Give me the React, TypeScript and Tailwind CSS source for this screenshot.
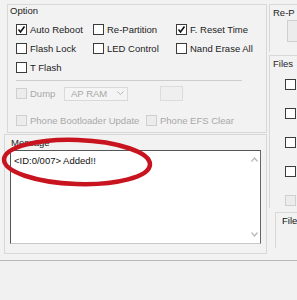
import React from "react";

type CheckProps = {
  label?: string;
  checked?: boolean;
  disabled?: boolean;
};

function Check({ label, checked, disabled }: CheckProps) {
  return (
    <div className="flex h-[11px] items-center gap-[3px]">
      <span
        className={
          disabled
            ? "flex h-[11px] w-[11px] shrink-0 items-center justify-center border border-[#cfcfcf] bg-[#ececec]"
            : "flex h-[11px] w-[11px] shrink-0 items-center justify-center border border-[#3c3c3c] bg-white"
        }
      >
        {checked && (
          <svg width="9" height="9" viewBox="0 0 9 9">
            <polyline points="1.5,4.5 3.5,7 7.5,1.5" fill="none" stroke="#111" strokeWidth="1.6" />
          </svg>
        )}
      </span>
      {label && (
        <span className={disabled ? "whitespace-nowrap text-[#a8a8a8]" : "whitespace-nowrap text-[#222]"}>
          {label}
        </span>
      )}
    </div>
  );
}

export default function App() {
  return (
    <div className="relative flex h-[300px] w-[297px] flex-col overflow-hidden bg-[#f2f2f2] font-['Liberation_Sans',Arial,sans-serif] text-[9.5px] leading-[11px]">
      <div className="flex h-[260px]">
        {/* left column */}
        <div className="flex w-[269px] flex-col pt-[4px]">
          {/* Option group */}
          <div className="ml-[7px] flex h-[129px] w-[260px] flex-col border border-[#d8d8d8] px-[8px]">
            <div className="-ml-[6px] mt-[1px] leading-[9px] text-[#222]">Option</div>
            <div className="mt-[9px] grid grid-cols-[77px_83px_auto] gap-y-[8px]">
              <Check label="Auto Reboot" checked />
              <Check label="Re-Partition" />
              <Check label="F. Reset Time" checked />
              <Check label="Flash Lock" />
              <Check label="LED Control" />
              <Check label="Nand Erase All" />
              <Check label="T Flash" />
            </div>
            <div className="mt-[7px] h-px w-[226px] bg-[#cdcdcd]" />
            <div className="mt-[5px] flex h-[15px] items-center">
              <div className="w-[48px]">
                <Check label="Dump" disabled />
              </div>
              <div className="flex h-[14px] w-[64px] items-center justify-between border border-[#d9d9d9] bg-[#f4f4f4] pl-[6px] pr-[3px] text-[#a8a8a8]">
                <span>AP RAM</span>
                <svg width="7" height="5" viewBox="0 0 7 5">
                  <polyline points="0.5,0.5 3.5,3.5 6.5,0.5" fill="none" stroke="#b5b5b5" strokeWidth="1" />
                </svg>
              </div>
              <div className="ml-[32px] h-[15px] w-[23px] border border-[#dcdcdc] bg-[#efefef]" />
            </div>
            <div className="mt-[14px] flex h-[11px] items-center">
              <div className="w-[130px]">
                <Check label="Phone Bootloader Update" disabled />
              </div>
              <Check label="Phone EFS Clear" disabled />
            </div>
          </div>

          {/* Message group */}
          <div className="ml-[4px] mt-[1px] flex h-[120px] w-[263px] flex-col border border-[#d8d8d8] px-[5px]">
            <div className="ml-[1px] mt-[3px] leading-[9px] text-[#222]">Message</div>
            <div className="mt-[3px] flex h-[94px] w-[251px] border-b border-l border-r border-t border-b-[#c9c9c9] border-l-[#555] border-r-[#666] border-t-[#555] bg-white">
              <div className="flex-1 pl-[3px] pt-[4px] text-[9.5px] leading-[11px] text-[#111]">
                &lt;ID:0/007&gt; Added!!
              </div>
              <div className="flex w-[12px] flex-col items-center justify-between py-[6px]">
                <svg width="7" height="5" viewBox="0 0 7 5">
                  <polyline points="0.5,4.5 3.5,1 6.5,4.5" fill="none" stroke="#b8b8b8" strokeWidth="1.2" />
                </svg>
                <svg width="7" height="5" viewBox="0 0 7 5">
                  <polyline points="0.5,0.5 3.5,4 6.5,0.5" fill="none" stroke="#b8b8b8" strokeWidth="1.2" />
                </svg>
              </div>
            </div>
          </div>
        </div>

        {/* right column */}
        <div className="flex w-[28px] flex-col pt-[4px]">
          <div className="flex h-[48px] flex-col border-l border-t border-[#d8d8d8] pl-[3px]">
            <div className="mt-[3px] leading-[9px] text-[#222]">Re-P</div>
            <div className="ml-[14px] mt-[3px] h-[22px] w-[12px] border border-r-0 border-[#cfcfcf] bg-[#ececec]" />
          </div>
          <div className="mt-[3px] flex h-[153px] flex-col border-l border-t border-[#d8d8d8] pl-[3px]">
            <div className="mt-[3px] leading-[9px] text-[#222]">Files</div>
            <div className="ml-[12px] mt-[11px] flex flex-col gap-y-[18px]">
              <Check />
              <Check />
              <Check />
              <Check />
              <Check disabled />
            </div>
          </div>
          <div className="ml-[6px] mt-[4px] flex h-[36px] flex-col border-l border-t border-[#d8d8d8] pl-[6px]">
            <div className="mt-[3px] leading-[9px] text-[#111]">File</div>
          </div>
        </div>
      </div>

      {/* bottom strip */}
      <div className="h-px bg-[#b8b8b8]" />
      <div className="flex-1 bg-[#f1f1f1]" />

      {/* red marker ellipse */}
      <svg className="pointer-events-none absolute left-0 top-0" width="297" height="300" viewBox="0 0 297 300">
        <ellipse
          cx="77"
          cy="162"
          rx="73"
          ry="22"
          transform="rotate(2 77 162)"
          fill="none"
          stroke="#c8141e"
          strokeWidth="4.5"
        />
      </svg>
    </div>
  );
}
